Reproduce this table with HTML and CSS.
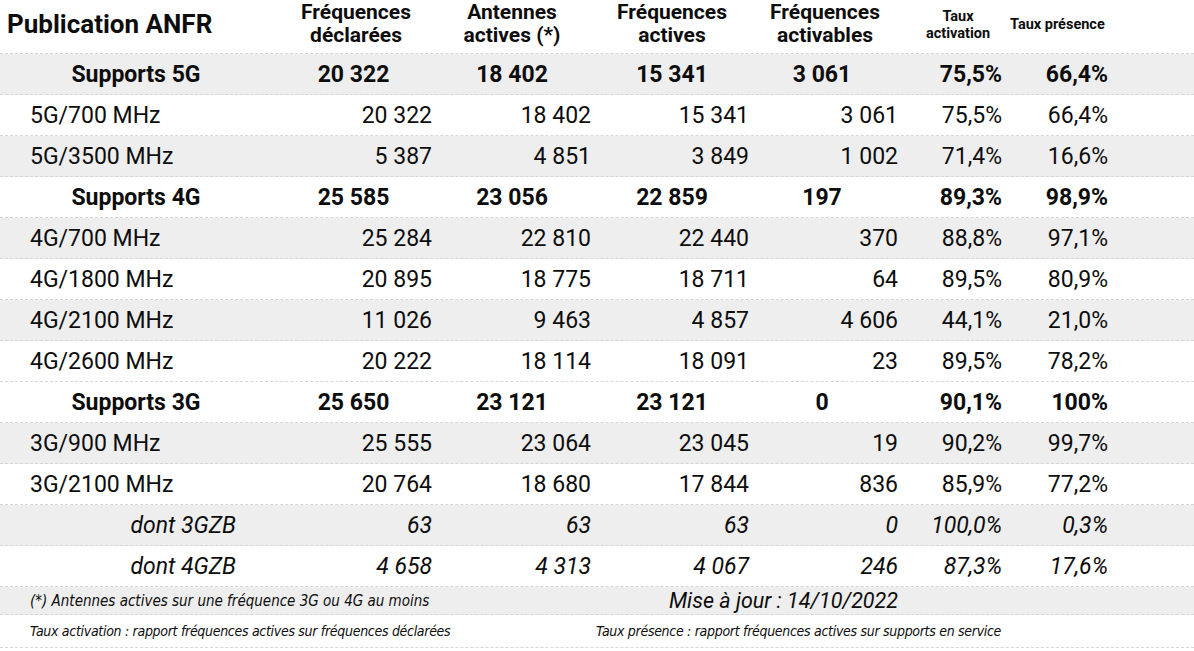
FILE: index.html
```html
<!DOCTYPE html>
<html lang="fr">
<head>
<meta charset="utf-8">
<title>Publication ANFR</title>
<link rel="stylesheet" href="styles.css">
</head>
<body>
<div class="sheet">
  <div class="row head">
    <div class="c1 title">Publication ANFR</div>
    <div class="c2 hcell">Fréquences<br>déclarées</div>
    <div class="c3 hcell">Antennes<br>actives (*)</div>
    <div class="c4 hcell">Fréquences<br>actives</div>
    <div class="c5 hcell">Fréquences<br>activables</div>
    <div class="c6 hsmall">Taux<br>activation</div>
    <div class="c7 hsmall nowrap">Taux présence</div>
  </div>

  <div class="row body sup gray">
    <div class="c1 lab">Supports 5G</div>
    <div class="c2 mid">20 322</div><div class="c3 mid">18 402</div><div class="c4 mid">15 341</div><div class="c5 mid">3 061</div>
    <div class="c6 num">75,5%</div><div class="c7 num">66,4%</div>
  </div>
  <div class="row body sub">
    <div class="c1 lab">5G/700 MHz</div>
    <div class="c2 num">20 322</div><div class="c3 num">18 402</div><div class="c4 num">15 341</div><div class="c5 num">3 061</div>
    <div class="c6 num">75,5%</div><div class="c7 num">66,4%</div>
  </div>
  <div class="row body sub gray">
    <div class="c1 lab">5G/3500 MHz</div>
    <div class="c2 num">5 387</div><div class="c3 num">4 851</div><div class="c4 num">3 849</div><div class="c5 num">1 002</div>
    <div class="c6 num">71,4%</div><div class="c7 num">16,6%</div>
  </div>
  <div class="row body sup">
    <div class="c1 lab">Supports 4G</div>
    <div class="c2 mid">25 585</div><div class="c3 mid">23 056</div><div class="c4 mid">22 859</div><div class="c5 mid">197</div>
    <div class="c6 num">89,3%</div><div class="c7 num">98,9%</div>
  </div>
  <div class="row body sub gray">
    <div class="c1 lab">4G/700 MHz</div>
    <div class="c2 num">25 284</div><div class="c3 num">22 810</div><div class="c4 num">22 440</div><div class="c5 num">370</div>
    <div class="c6 num">88,8%</div><div class="c7 num">97,1%</div>
  </div>
  <div class="row body sub">
    <div class="c1 lab">4G/1800 MHz</div>
    <div class="c2 num">20 895</div><div class="c3 num">18 775</div><div class="c4 num">18 711</div><div class="c5 num">64</div>
    <div class="c6 num">89,5%</div><div class="c7 num">80,9%</div>
  </div>
  <div class="row body sub gray">
    <div class="c1 lab">4G/2100 MHz</div>
    <div class="c2 num">11 026</div><div class="c3 num">9 463</div><div class="c4 num">4 857</div><div class="c5 num">4 606</div>
    <div class="c6 num">44,1%</div><div class="c7 num">21,0%</div>
  </div>
  <div class="row body sub">
    <div class="c1 lab">4G/2600 MHz</div>
    <div class="c2 num">20 222</div><div class="c3 num">18 114</div><div class="c4 num">18 091</div><div class="c5 num">23</div>
    <div class="c6 num">89,5%</div><div class="c7 num">78,2%</div>
  </div>
  <div class="row body sup">
    <div class="c1 lab">Supports 3G</div>
    <div class="c2 mid">25 650</div><div class="c3 mid">23 121</div><div class="c4 mid">23 121</div><div class="c5 mid">0</div>
    <div class="c6 num">90,1%</div><div class="c7 num">100%</div>
  </div>
  <div class="row body sub gray">
    <div class="c1 lab">3G/900 MHz</div>
    <div class="c2 num">25 555</div><div class="c3 num">23 064</div><div class="c4 num">23 045</div><div class="c5 num">19</div>
    <div class="c6 num">90,2%</div><div class="c7 num">99,7%</div>
  </div>
  <div class="row body sub">
    <div class="c1 lab">3G/2100 MHz</div>
    <div class="c2 num">20 764</div><div class="c3 num">18 680</div><div class="c4 num">17 844</div><div class="c5 num">836</div>
    <div class="c6 num">85,9%</div><div class="c7 num">77,2%</div>
  </div>
  <div class="row body dont gray">
    <div class="c1 lab">dont 3GZB</div>
    <div class="c2 num">63</div><div class="c3 num">63</div><div class="c4 num">63</div><div class="c5 num">0</div>
    <div class="c6 num">100,0%</div><div class="c7 num">0,3%</div>
  </div>
  <div class="row body dont">
    <div class="c1 lab">dont 4GZB</div>
    <div class="c2 num">4 658</div><div class="c3 num">4 313</div><div class="c4 num">4 067</div><div class="c5 num">246</div>
    <div class="c6 num">87,3%</div><div class="c7 num">17,6%</div>
  </div>

  <div class="row foot1 gray">
    <div class="note1">(*) Antennes actives sur une fréquence 3G ou 4G au moins</div>
    <div class="update">Mise à jour : 14/10/2022</div>
  </div>
  <div class="row foot2">
    <div class="note2 left">Taux activation : rapport fréquences actives sur fréquences déclarées</div>
    <div class="note2 right">Taux présence : rapport fréquences actives sur supports en service</div>
  </div>
</div>
</body>
</html>
```

FILE: styles.css
```css
html, body {
  margin: 0;
  padding: 0;
  background: #ffffff;
}

body {
  font-family: "Roboto", "Liberation Sans", sans-serif;
  color: #0d0d0d;
}

.sheet {
  width: 1194px;
}

.row {
  display: grid;
  grid-template-columns: 272px 168px 159px 158px 149px 104px 106px 1fr;
  align-items: center;
  border-bottom: 1px dashed #d6d6d6;
}

.gray {
  background: #eeeeee;
}

.c1 { grid-column: 1; }
.c2 { grid-column: 2; }
.c3 { grid-column: 3; }
.c4 { grid-column: 4; }
.c5 { grid-column: 5; }
.c6 { grid-column: 6; }
.c7 { grid-column: 7; }

/* Header */
.head {
  height: 47px;
  padding-bottom: 6px;
}

.title {
  font-size: 26px;
  font-weight: 700;
  padding-left: 7px;
  padding-top: 1px;
  white-space: nowrap;
}

.hcell {
  font-size: 21px;
  font-weight: 700;
  line-height: 23px;
  text-align: center;
}

.head .c3 { padding-right: 15px; }
.head .c4 { padding-right: 12px; }
.head .c5 { padding-right: 13px; }

.hsmall {
  font-size: 14.5px;
  font-weight: 700;
  line-height: 17px;
  text-align: center;
}

.head .c6 { padding-top: 2px; }
.head .c7 { padding-right: 12px; padding-top: 1px; }

.nowrap {
  white-space: nowrap;
}

/* Body rows */
.body {
  height: 40px;
  font-size: 23px;
}

.num {
  text-align: right;
  padding-right: 8px;
  white-space: nowrap;
}

.mid {
  text-align: center;
  white-space: nowrap;
}

.sup {
  font-weight: 700;
}

.sup .lab {
  text-align: center;
}

.sup .c2 { padding-right: 5px; }
.sup .c3 { padding-right: 15px; }
.sup .c4 { padding-right: 12px; }
.sup .c5 { padding-right: 19px; }

.sub .lab {
  padding-left: 30px;
}

.dont {
  font-style: italic;
}

.dont .lab {
  text-align: right;
  padding-right: 36px;
}

/* Footer */
.foot1 {
  height: 27px;
}

.foot2 {
  height: 32px;
}

.note1 {
  grid-column: 1 / 4;
  padding-left: 30px;
  font-family: "DejaVu Sans Condensed", "Liberation Sans Narrow", "Roboto", sans-serif;
  font-style: italic;
  font-size: 15px;
  white-space: nowrap;
}

.update {
  grid-column: 4 / 6;
  text-align: right;
  padding-right: 8px;
  font-size: 21.5px;
  font-style: italic;
  white-space: nowrap;
}

.note2 {
  font-family: "DejaVu Sans Condensed", "Liberation Sans Narrow", "Roboto", sans-serif;
  font-style: italic;
  font-size: 14px;
  letter-spacing: -0.3px;
  white-space: nowrap;
}

.note2.left {
  grid-column: 1 / 4;
  padding-left: 30px;
}

.note2.right {
  grid-column: 4 / 8;
  margin-left: -3px;
}
```
